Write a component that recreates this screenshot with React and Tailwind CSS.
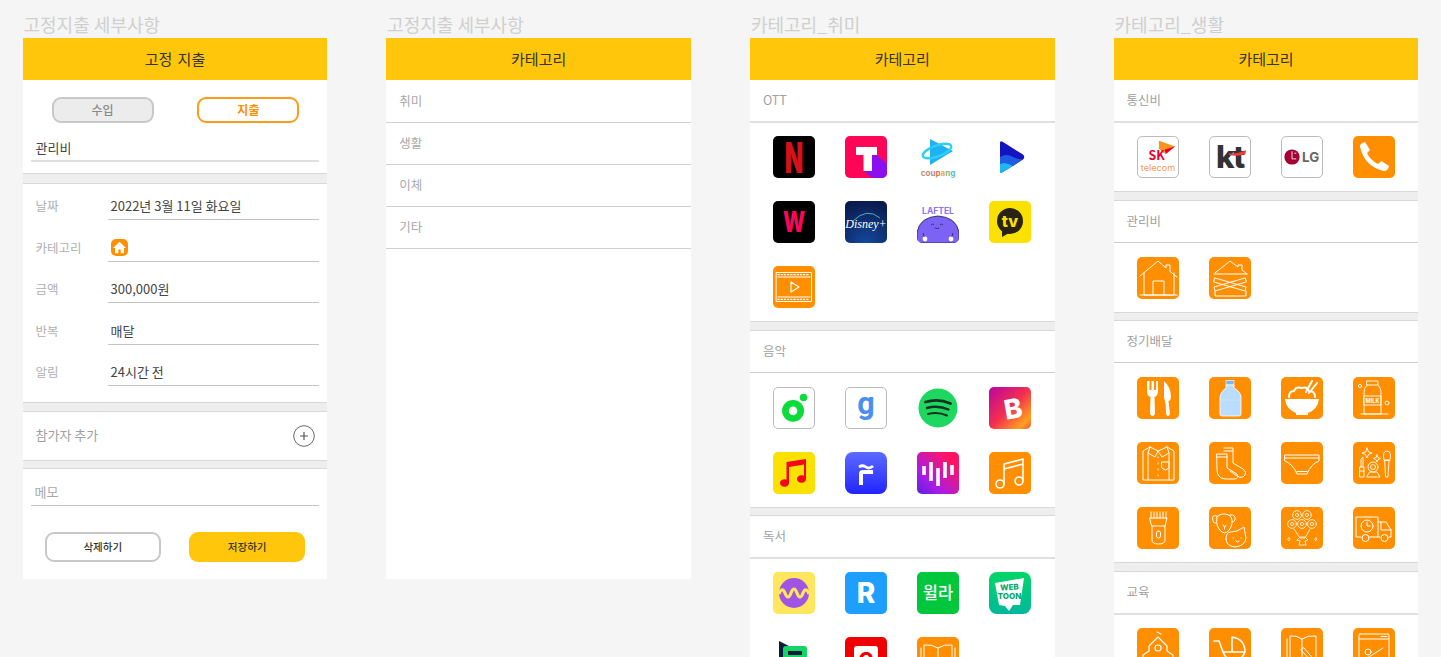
import React from "react";

// shared logo tile, everything inside is drawn on a 42x42 grid
const Tile = ({ className = "", children }) => (
  <div className={`w-[42px] h-[42px] rounded-[5px] overflow-hidden ${className}`}>
    <svg viewBox="0 0 42 42" className="block w-full h-full">
      {children}
    </svg>
  </div>
);

const Outline = ({ children, w = 1 }) => (
  <g fill="none" stroke="#fff" strokeWidth={w} strokeLinecap="round" strokeLinejoin="round">
    {children}
  </g>
);

const Orange = ({ children, w }) => (
  <Tile className="bg-[#ff8f00]">
    <Outline w={w}>{children}</Outline>
  </Tile>
);

const Flower = ({ x, y }) => (
  <g>
    <circle cx={x} cy={y} r="4.4" />
    <circle cx={x} cy={y} r="1.6" />
  </g>
);

const ottIcons = [
  <Tile className="bg-black" key="netflix">
    <text transform="translate(21 37) scale(.56 1)" textAnchor="middle" fontSize="43" fontWeight="900" fill="#d3121c" fontFamily="Inter">N</text>
  </Tile>,
  <Tile className="bg-[#ff0558]" key="tving">
    <polygon points="32,19 42,28 42,42 27,42 18,34 27,19" fill="#8b10f0" />
    <rect x="11" y="11" width="21" height="8" fill="#fff" />
    <rect x="18.5" y="19" width="8.5" height="16" fill="#fff" />
  </Tile>,
  <Tile key="coupang">
    <polygon points="13,3 36,15 13,29" fill="#1fb2f2" />
    <ellipse cx="20" cy="15" rx="15" ry="5.5" transform="rotate(-20 20 15)" fill="none" stroke="#2fcdf7" strokeWidth="2.4" />
    <text x="21" y="40" textAnchor="middle" fontSize="8" fontWeight="700" fontFamily="Inter">
      <tspan fill="#b98a78">cou</tspan>
      <tspan fill="#e0705a">p</tspan>
      <tspan fill="#e3b04a">a</tspan>
      <tspan fill="#7cc46a">n</tspan>
      <tspan fill="#5ab7e0">g</tspan>
    </text>
  </Tile>,
  <Tile key="wavve">
    <path d="M11 7 Q11 4 14 6 L34 18.5 Q36.5 21 34 23.5 L14 36 Q11 38 11 35Z" fill="#1414c0" />
    <path d="M11 21 Q18 17 24 21 Q28 23 33 23.5 L24 30 Q17 25 11 28Z" fill="#1f5ce6" />
    <path d="M11 28 Q17 25 24 30 L14 36 Q11 38 11 35Z" fill="#1fb6f7" />
  </Tile>,
  <Tile className="bg-black" key="watcha">
    <text transform="translate(21 31) scale(.72 1)" textAnchor="middle" fontSize="29" fontWeight="800" fill="#ff0558" fontFamily="Inter">W</text>
  </Tile>,
  <Tile className="bg-[radial-gradient(circle_at_50%_100%,#14489c,#0a1a4d_90%)]" key="disney">
    <path d="M8 20 Q22 6 35 17" fill="none" stroke="#5ad0d8" strokeWidth=".8" />
    <text x="21" y="27" textAnchor="middle" fontSize="12" fontStyle="italic" fill="#fff" fontFamily="Liberation Serif">Disney+</text>
  </Tile>,
  <Tile key="laftel">
    <text x="21" y="13" textAnchor="middle" fontSize="8.5" fontWeight="700" fill="#8a74f5" fontFamily="Inter">LAFTEL</text>
    <path d="M0 42 V31 Q3 16 21 15 Q39 16 42 31 V42Z" fill="#7c62f5" stroke="#22204a" strokeWidth=".8" />
    <path d="M14 24 q2 -2 3 0 M23 24 q2 -2 3 0 M18 27 q2 1 4 0" fill="none" stroke="#22204a" strokeWidth=".7" />
    <path d="M6 32 l2 6 M36 32 l-2 6" stroke="#22204a" strokeWidth=".8" />
    <circle cx="8" cy="38" r="2.4" fill="#fff" />
    <circle cx="34" cy="38" r="2.4" fill="#fff" />
  </Tile>,
  <Tile className="bg-[#fae100]" key="kakaotv">
    <circle cx="21" cy="20" r="13" fill="#2a2311" />
    <polygon points="13,29 13,36 20,32" fill="#2a2311" />
    <text x="21" y="25.5" textAnchor="middle" fontSize="16" fontWeight="800" fill="#fae100" fontFamily="Inter">tv</text>
  </Tile>,
  <Orange key="video">
    <rect x="3.5" y="6.5" width="35" height="29" />
    <path d="M5 11 H37 M5 31 H37" />
    <path d="M5 8.7 H37 M5 33.3 H37" strokeDasharray="1.2 2" strokeWidth="1.3" />
    <polygon points="18,16 26,21 18,26" strokeWidth="1.2" />
  </Orange>,
];

const musicIcons = [
  <Tile className="border border-[#bbb]" key="melon">
    <circle cx="20" cy="24" r="8" fill="none" stroke="#0bdc3a" strokeWidth="7" />
    <circle cx="31" cy="10" r="4" fill="#0bdc3a" />
  </Tile>,
  <Tile className="border border-[#bbb]" key="genie">
    <text x="21" y="27" textAnchor="middle" fontSize="32" fontWeight="700" fill="#4a8ef0" fontFamily="Roboto">g</text>
  </Tile>,
  <Tile key="spotify">
    <circle cx="21" cy="21" r="19.5" fill="#1ed760" />
    <g fill="none" stroke="#17301f" strokeLinecap="round">
      <path d="M8.5 15 Q21 11 33.5 16.5" strokeWidth="2.8" />
      <path d="M10 21 Q21 18 31.5 22.5" strokeWidth="2.4" />
      <path d="M11 27 Q21 24.5 30 28.5" strokeWidth="2" />
    </g>
  </Tile>,
  <Tile className="bg-[linear-gradient(135deg,#c0089a_5%,#f2304e_50%,#ffa11f_85%,#f4503a)]" key="bugs">
    <text x="24" y="32" textAnchor="middle" fontSize="27" fontWeight="800" fill="#fff" fontFamily="Inter" transform="rotate(-10 21 21)">B</text>
  </Tile>,
  <Tile className="bg-[#fae100]" key="ymusic">
    <g fill="#f5051e">
      <ellipse cx="11.5" cy="31" rx="4.5" ry="3.8" />
      <ellipse cx="28.5" cy="27" rx="4.5" ry="3.8" />
      <path d="M13.5 31 H16 V15 L31 12.5 V27 H33 V7 L13.5 10Z" />
    </g>
  </Tile>,
  <Tile className="bg-[linear-gradient(180deg,#5b6cff,#2224ff)] rounded-[8px]" key="flo">
    <g fill="none" stroke="#fff" strokeLinecap="butt">
      <path d="M14 15 Q18 12.5 21 15 T28 14" strokeWidth="2.8" />
      <path d="M16 33 V22 Q16 20 18 20 H28" strokeWidth="4" />
    </g>
  </Tile>,
  <Tile className="bg-[linear-gradient(225deg,#ff1464_20%,#a81ce8_70%,#5a22e0)]" key="vibe">
    <g stroke="#fff" strokeWidth="3.6" strokeLinecap="butt">
      <path d="M7 14 V23 M14 10 V29 M21 16 V34 M28 10 V26 M35 13 V23" />
    </g>
  </Tile>,
  <Orange key="note" w={1.6}>
    <circle cx="11" cy="32" r="4" />
    <circle cx="30" cy="29" r="4" />
    <path d="M15 32 V12 L34 7 V29 M15 17 L34 12" />
  </Orange>,
];

const bookIcons = [
  <Tile className="bg-[#ffe65c]" key="millie">
    <circle cx="21" cy="21" r="15" fill="#a154e3" />
    <path d="M6 22 Q9 14 12 21 Q15 29 18 21 Q21 13 24 21 Q27 29 30 21 Q33 14 36 22" fill="none" stroke="#ffe65c" strokeWidth="3.2" />
  </Tile>,
  <Tile className="bg-[#1e9eff]" key="ridi">
    <text x="21" y="31" textAnchor="middle" fontSize="28" fontWeight="800" fill="#fff" fontFamily="Inter">R</text>
  </Tile>,
  <Tile className="bg-[#00c73c]" key="welaaa">
    <text x="21" y="27" textAnchor="middle" fontSize="16.5" fontWeight="500" fill="#fff" fontFamily="Noto Sans CJK KR">윌라</text>
  </Tile>,
  <Tile className="bg-[linear-gradient(180deg,#05d665,#00b89c)] rounded-[8px]" key="webtoon">
    <polygon points="6,11 35,6 31,33 24,33 20,39 16,34 10,33" fill="#fff" />
    <text x="20.5" y="18" textAnchor="middle" fontSize="8" fontWeight="800" fill="#00a968" fontFamily="Inter" transform="rotate(-3 21 18)">WEB</text>
    <text x="20.5" y="27" textAnchor="middle" fontSize="8" fontWeight="800" fill="#00a968" fontFamily="Inter">TOON</text>
  </Tile>,
  <Tile key="bookcube">
    <polygon points="6,4 26,14 6,30" fill="#0c1b3c" />
    <rect x="10" y="9" width="24" height="24" rx="3" fill="#14d466" />
    <rect x="15" y="14" width="14" height="4" fill="#0c1b3c" />
  </Tile>,
  <Tile className="bg-[#f00000]" key="yes">
    <rect x="9" y="9" width="24" height="26" rx="3" fill="#fff" />
    <text x="21" y="30" textAnchor="middle" fontSize="20" fontWeight="800" fill="#f00000" fontFamily="Inter">C</text>
  </Tile>,
  <Orange key="book">
    <path d="M21 11 Q15 7 7 8 V32 Q15 31 21 35 Q27 31 35 32 V8 Q27 7 21 11 V35" />
    <path d="M4 11 V35 H38 V11" />
  </Orange>,
];

const telecomIcons = [
  <Tile className="border border-[#bbb]" key="sk">
    <polygon points="22,4 39,10 27,17 22,12" fill="#f7941d" />
    <polygon points="28,13 39,10 29,18" fill="#ea002c" />
    <text x="19.5" y="24" textAnchor="middle" fontSize="13" fontWeight="700" fill="#ea002c" fontFamily="Noto Sans CJK KR">SK</text>
    <text x="21" y="36" textAnchor="middle" fontSize="9.6" fill="#f99a50" fontFamily="Inter">telecom</text>
  </Tile>,
  <Tile className="border border-[#bbb]" key="kt">
    <text x="21" y="33" textAnchor="middle" fontSize="33" fontWeight="800" fill="#333" fontFamily="Inter" letterSpacing="-1.5">kt</text>
    <path d="M20 17 Q28 18 38 14 L37 18 Q28 21 20 19Z" fill="#ec3a35" />
  </Tile>,
  <Tile className="border border-[#bbb]" key="lg">
    <circle cx="10.5" cy="21" r="8" fill="#a50034" />
    <path d="M10.5 15 V23 H15 M13 17 h2" fill="none" stroke="#fff" strokeWidth=".9" />
    <text x="30" y="26" textAnchor="middle" fontSize="14" fontWeight="700" fill="#666" fontFamily="Inter">LG</text>
  </Tile>,
  <Tile className="bg-[#ff8f00]" key="phone">
    <path d="M7 11 Q6 8 12 6 L17 14 L14 17 Q17 24 25 28 L28.5 25 L36 30 Q35 35 31 35 Q12 31 7 11Z" fill="#fff" />
  </Tile>,
];

const maintenanceIcons = [
  <Orange key="house">
    <path d="M3 19 L21 4 L29 11 V8 H33 V14.5 L40 20 M7 16 V38 H37 V16 M3 38 H40 M16 38 V24 H27 V38" />
  </Orange>,
  <Orange key="boarded">
    <path d="M6 16 L21 4 L29 10 V8 H33 V13 L38 17 M5 17 H38" />
    <path d="M6 21 L37 30 L36 34 L5 25Z M36 21 L5 30 L6 34 L37 25Z" />
    <path d="M6 34 V39 H37 V34" />
  </Orange>,
];

const deliveryIcons = [
  <Tile className="bg-[#ff8f00]" key="food">
    <path d="M10 4 V14 Q10 19 13.5 20 L13 37 Q15.5 41 18 37 L17.5 20 Q21 19 21 14 V4 H19 V13 H17 V4 H14.5 V13 H12.5 V4Z" fill="#fff" />
    <path d="M27 4 Q34 10 34 20 Q33.5 24 31.5 24 L33 37 Q31 41 29 37 Q29.5 28 27 20Z" fill="#fff" />
  </Tile>,
  <Tile className="bg-[#ff8f00]" key="water">
    <rect x="17" y="3.5" width="8" height="4.5" fill="#7ab8f5" stroke="#fff" strokeWidth=".6" />
    <path d="M17 8 H25 V11 Q32 15 32 20 V37 Q32 39 30 39 H13 Q11 39 11 37 V20 Q11 15 17 11Z" fill="#b9dcff" stroke="#fff" strokeWidth=".8" />
    <path d="M11 23 H32" stroke="#d6eaff" strokeWidth=".6" />
  </Tile>,
  <Tile className="bg-[#ff8f00]" key="rice">
    <path d="M4 22 H38 Q37 32 27 36 V38 H15 V36 Q5 32 4 22Z" fill="#fff" />
    <Outline w={2}>
      <path d="M8 20 Q8 14 13 14 Q15 9 21 11 Q26 9 28 14 Q34 14 34 20" />
      <path d="M25 15 L31 4 M28 16 L36 6" />
    </Outline>
  </Tile>,
  <Orange key="milk" w={.9}>
    <path d="M14 4 H25 V8 H14Z M14 8 Q11 11 11 15 V37 H28 V15 Q28 11 25 8 M8 37 H35" />
    <rect x="11" y="19" width="17" height="9" />
    <circle cx="7" cy="9" r="1.6" />
    <circle cx="34" cy="26" r="2" />
    <text x="19.5" y="26" textAnchor="middle" fontSize="5.6" fontWeight="700" fill="#fff" stroke="none" fontFamily="Inter">MILK</text>
  </Orange>,
  <Orange key="shirt">
    <path d="M13 5 L6 9 V38 H37 V9 L30 5 M13 5 L21 9 L30 5 M13 5 L11 11 L18 15 L21 9 L25 15 L32 11 L30 5" />
    <path d="M11 11 V38 M32 11 V38" />
    <path d="M21 15 V38" strokeDasharray="1 5" />
    <path d="M25 20 H32 V26 L28.5 28 L25 26Z" />
  </Orange>,
  <Orange key="socks">
    <path d="M15 6 H24 V21 L34 27 Q38 30 36 33 Q33 37 28 34 L21 29" />
    <path d="M8 12 H18 V26 L28 32 Q30 36 26 37 H16 Q8 36 8 28Z" />
    <path d="M8 15 H18 M15 9 H24" />
  </Orange>,
  <Orange key="underwear">
    <path d="M4 13 H38 V19 Q30 22 26 32 H16 Q12 22 4 19Z M4 16 H38 M16 29.5 H26" />
  </Orange>,
  <Orange key="cosmetics" w={.9}>
    <path d="M7 25 H11 V35 H7Z M8 25 V17 L10 15 V25 M7 29 H11" />
    <circle cx="20" cy="25" r="5" />
    <circle cx="20" cy="25" r="2.5" />
    <path d="M14 35 H27 L24 30 H17Z" />
    <path d="M31 18 Q29 9 34 9 Q39 9 37 18Z M32 18 H36 L35 35 H33Z" />
    <path d="M14 6 L15.5 10 L19 11 L15.5 12.5 L14 16 L12.5 12.5 L9 11 L12.5 10Z" />
    <path d="M24 13 L25 15.5 L27.5 16.5 L25 17.5 L24 20 L23 17.5 L20.5 16.5 L23 15.5Z" />
  </Orange>,
  <Orange key="shaver">
    <path d="M13 11 H30 L28 19 H15Z M15 19 V33 Q15 37 21.5 37 Q28 37 28 33 V19" />
    <path d="M14 5 V11 M17 5 V11 M20 5 V11 M23 5 V11 M26 5 V11 M29 5 V11" />
    <rect x="19.5" y="24" width="4" height="7" rx="2" />
  </Orange>,
  <Orange key="pets">
    <path d="M8 10 Q12 5 20 8 Q25 12 22 20 Q18 28 13 25 Q6 20 8 10Z" />
    <path d="M8 9 Q2 7 4 14 Q5 17 7 16 M21 8 Q27 7 26 13 Q25 15 23 15" />
    <path d="M14 18 l1.5 2 l1.5 -2 M15.5 20 V22" />
    <path d="M17 32 Q17 25 22 25 L28 24 L35 20 L37 31 Q36 39 26 40 Q17 39 17 32Z" />
    <path d="M24 31 h.4 M32 31 h.4 M27 34 l1.5 1 l1.5 -1" />
  </Orange>,
  <Orange key="bouquet" w={.8}>
    <Flower x={16} y={8} />
    <Flower x={26} y={8} />
    <Flower x={11} y={17} />
    <Flower x={21} y={17} />
    <Flower x={31} y={17} />
    <path d="M13 22 L19 31 H24 L29 22 M16 33 L19 30 H24 L27 33 L24 34 L25 38 H18 L19 34Z" />
    <path d="M7 32 l1 -1.5 l1 1.5 l-1 1.5Z M34 32 l1 -1.5 l1 1.5 l-1 1.5Z" />
  </Orange>,
  <Orange key="truck">
    <path d="M8 30 H3 V10 H25 V30 H17 M25 15 H33 L38 23 V30 H36 M25 30 H27 M28 15 V23 H38" />
    <circle cx="14" cy="19" r="6" />
    <path d="M14 15 V19 H17" />
    <circle cx="12.5" cy="31" r="3.5" />
    <circle cx="31.5" cy="31" r="3.5" />
  </Orange>,
];

const educationIcons = [
  <Orange key="school" w={1.2}>
    <path d="M20 4 L24 6 M21 9 L30 18 V23 L36 27 V42 M21 9 L12 18 V23 L6 27 V42" />
    <circle cx="21" cy="20" r="3" />
  </Orange>,
  <Orange key="stroller" w={1.6}>
    <path d="M5 13 H10 L14 24 H36 Q36 11 23 9 V24 M14 24 Q17 32 25 32 Q33 32 36 24" />
  </Orange>,
  <Orange key="study">
    <path d="M21 11 Q15 7 9 8 V34 M21 11 Q27 7 35 8 V33 M21 11 V30 M6 11 V38 H16" />
    <path d="M20 22 L33 36 L36 38 L35 34 L23 20Z" />
  </Orange>,
  <Orange key="lecture">
    <rect x="6" y="6" width="30" height="34" rx="1" />
    <path d="M6 11 H36 M28 8.5 H34" />
    <circle cx="15" cy="24" r="3" />
    <path d="M10 36 Q11 29 16 29 L30 20" />
  </Orange>,
];

// thick sections have the heavier 2px rule the mockup shows under some headings
const IconSection = ({ title, icons, thick }) => (
  <div>
    <div className={`flex items-center px-[13px] text-[12.5px] text-[#a0a0a0] ${thick ? "h-[43px] border-b-2 border-[#e0e0e0]" : "h-[42px] border-b border-[#cccccc]"}`}>
      {title}
    </div>
    <div className={`grid grid-cols-[repeat(4,42px)] gap-x-[30px] gap-y-[23px] pl-[23px] pb-[13px] ${thick ? "pt-[13px]" : "pt-[14px]"}`}>
      {icons}
    </div>
  </div>
);

const Band = ({ className = "h-[9.5px]" }) => (
  <div className={`shrink-0 bg-[#eeeeee] border-y border-[#d8d8d8] ${className}`} />
);

const Header = ({ title }) => (
  <div className="h-[42px] flex items-center justify-center bg-[#ffc60b] text-[15px] text-[#333] [word-spacing:2px]">
    {title}
  </div>
);

const Column = ({ label, title, children }) => (
  <div className="w-[304.9px] shrink-0">
    <div className="h-[38px] pt-[12px] pl-px text-[18px] leading-[24px] text-[#cfcfcf]">{label}</div>
    <Header title={title} />
    {children}
  </div>
);

const FormRow = ({ label, children }) => (
  <div className="flex h-[41.6px] pl-[13px] pr-2 items-start">
    <span className="w-[72px] pt-[9px] text-[12.5px] text-[#b0b0b0]">{label}</span>
    <div className="flex-1 h-[32px] flex items-center pt-1 pl-[3px] text-[13px] text-[#444] border-b border-[#c4c4c4]">
      {children}
    </div>
  </div>
);

const DetailForm = () => (
  <div className="bg-white h-[499px] flex flex-col">
    <div className="h-[93px] shrink-0 px-2">
      <div className="flex justify-between pl-[21px] pr-5 pt-[17px]">
        <button className="w-[102px] h-[26px] rounded-[9px] border-2 border-[#c8c8c8] bg-[#ececec] text-[12px] font-medium text-[#8a8a8a]">
          수입
        </button>
        <button className="w-[102px] h-[26px] rounded-[9px] border-2 border-[#ff9a1a] text-[12px] font-bold text-[#ff8f00]">
          지출
        </button>
      </div>
      <div className="mt-[13px] h-[26px] pl-[5px] flex items-center text-[13px] text-[#444] border-b-2 border-[#e0e0e0]">
        관리비
      </div>
    </div>
    <Band className="h-[10.5px]" />
    <div className="h-[218.5px] shrink-0 pt-[4.5px]">
      <FormRow label="날짜">2022년 3월 11일 화요일</FormRow>
      <FormRow label="카테고리">
        <Tile className="!w-[17px] !h-[17px] bg-[#ff8f00]">
          <path d="M21 7 L37 22 H32 V35 H24 V26 H18 V35 H10 V22 H5Z" fill="#fff" />
        </Tile>
      </FormRow>
      <FormRow label="금액">300,000원</FormRow>
      <FormRow label="반복">매달</FormRow>
      <FormRow label="알림">24시간 전</FormRow>
    </div>
    <Band />
    <div className="h-[48px] shrink-0 flex items-center justify-between pl-[13px] pr-[12px] text-[13px] text-[#a0a0a0]">
      <span className="pb-[2px]">참가자 추가</span>
      <svg width="22" height="22" viewBox="0 0 22 22">
        <circle cx="11" cy="11" r="10.3" fill="none" stroke="#555" strokeWidth=".9" />
        <path d="M7 11 H15 M11 7 V15" stroke="#555" strokeWidth="1.2" />
      </svg>
    </div>
    <Band />
    <div className="px-2 pt-[11px]">
      <div className="h-[26px] pb-[2px] pl-1 flex items-center text-[13px] text-[#a8a8a8] border-b border-[#c4c4c4]">메모</div>
    </div>
    <div className="flex justify-between pl-[22px] pr-[22px] mt-[26px]">
      <button className="w-[116.5px] h-[29.5px] rounded-[9px] border-2 border-[#c8c8c8] text-[10.5px] font-medium text-[#333]">
        삭제하기
      </button>
      <button className="w-[116.5px] h-[29.5px] rounded-[9px] bg-[#ffc60b] text-[10.5px] font-medium text-[#333]">
        저장하기
      </button>
    </div>
  </div>
);

const CategoryList = () => (
  <div className="bg-white h-[499px] pt-px">
    {["취미", "생활", "이체", "기타"].map((item) => (
      <div key={item} className="h-[42px] flex items-center px-[13px] text-[12.5px] text-[#a8a8a8] border-b border-[#d0d0d0]">
        {item}
      </div>
    ))}
  </div>
);

export default function App() {
  return (
    <div className="h-[657px] overflow-hidden bg-[#f5f5f5] flex gap-[58.8px] pl-[22.5px] font-['Noto_Sans_CJK_KR','Noto_Sans',sans-serif]">
      <Column label="고정지출 세부사항" title="고정 지출">
        <DetailForm />
      </Column>
      <Column label="고정지출 세부사항" title="카테고리">
        <CategoryList />
      </Column>
      <Column label="카테고리_취미" title="카테고리">
        <div className="bg-white">
          <IconSection title="OTT" icons={ottIcons} thick />
          <Band />
          <IconSection title="음악" icons={musicIcons} />
          <Band />
          <IconSection title="독서" icons={bookIcons} thick />
        </div>
      </Column>
      <Column label="카테고리_생활" title="카테고리">
        <div className="bg-white">
          <IconSection title="통신비" icons={telecomIcons} thick />
          <Band />
          <IconSection title="관리비" icons={maintenanceIcons} />
          <Band />
          <IconSection title="정기배달" icons={deliveryIcons} />
          <Band />
          <IconSection title="교육" icons={educationIcons} thick />
        </div>
      </Column>
    </div>
  );
}
